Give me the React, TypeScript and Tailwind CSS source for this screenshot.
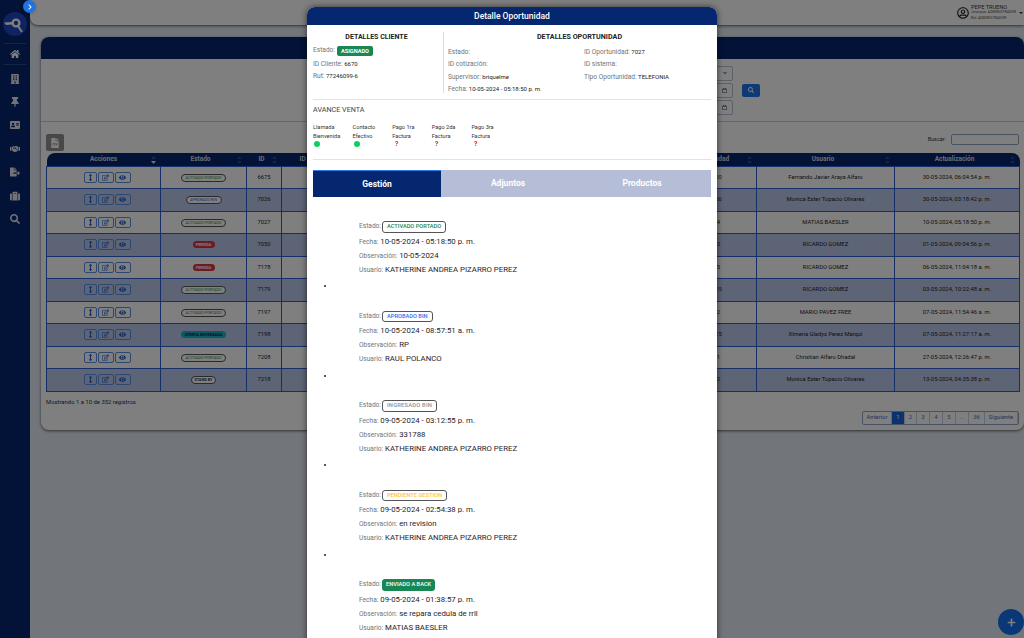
import React from 'react';
import {
  FaHome,
  FaBuilding,
  FaThumbtack,
  FaAddressCard,
  FaHandshake,
  FaFileExport,
  FaSuitcase,
  FaSearch,
  FaArrowsAltV,
  FaRegEdit,
  FaEye,
  FaFileCsv,
  FaChevronRight,
  FaRegCalendar,
  FaChevronDown,
  FaPlus,
  FaRegUserCircle,
  FaQuestion,
} from 'react-icons/fa';

type Status = 'activado' | 'aprobado' | 'perdida' | 'oferta' | 'standby';

interface Row {
  id: number;
  status: Status;
  qty: number;
  user: string;
  updated: string;
}

const rows: Row[] = [
  { id: 6675, status: 'activado', qty: 20, user: 'Fernando Javier Araya Alfaro', updated: '30-05-2024, 06:04:54 p. m.' },
  { id: 7026, status: 'aprobado', qty: 56, user: 'Monica Ester Topacio Olivares', updated: '30-05-2024, 03:18:42 p. m.' },
  { id: 7027, status: 'activado', qty: 4, user: 'MATIAS BAESLER', updated: '10-05-2024, 05:18:50 p. m.' },
  { id: 7050, status: 'perdida', qty: 3, user: 'RICARDO GOMEZ', updated: '01-05-2024, 09:04:56 p. m.' },
  { id: 7178, status: 'perdida', qty: 5, user: 'RICARDO GOMEZ', updated: '06-05-2024, 11:04:18 a. m.' },
  { id: 7179, status: 'activado', qty: 15, user: 'RICARDO GOMEZ', updated: '03-05-2024, 10:22:48 a. m.' },
  { id: 7197, status: 'activado', qty: 2, user: 'MARIO PAVEZ FREE', updated: '07-05-2024, 11:54:46 a. m.' },
  { id: 7198, status: 'oferta', qty: 15, user: 'Ximena Gladys Perez Marqui', updated: '07-05-2024, 11:27:17 a. m.' },
  { id: 7208, status: 'activado', qty: 1, user: 'Christian Alfaro Dhadal', updated: '27-05-2024, 12:26:47 p. m.' },
  { id: 7218, status: 'standby', qty: 2, user: 'Monica Ester Topacio Olivares', updated: '13-05-2024, 04:35:38 p. m.' },
];

const navIcons = [FaBuilding, FaThumbtack, FaAddressCard, FaHandshake, FaFileExport, FaSuitcase, FaSearch];

const pages = [
  { label: 'Anterior', cls: 'w-[29px]' },
  { label: '1', cls: 'w-[13px] bg-[#1565d8] text-white' },
  { label: '2', cls: 'w-[12px]' },
  { label: '3', cls: 'w-[13px]' },
  { label: '4', cls: 'w-[13px]' },
  { label: '5', cls: 'w-[13px]' },
  { label: '...', cls: 'w-[13px]' },
  { label: '36', cls: 'w-[16px]' },
  { label: 'Siguiente', cls: 'w-[33px]' },
];

const steps = [
  { top: 'Llamada', bottom: 'Bienvenida', done: true },
  { top: 'Contacto', bottom: 'Efectivo', done: true },
  { top: 'Pago 1ra', bottom: 'Factura', done: false },
  { top: 'Pago 2da', bottom: 'Factura', done: false },
  { top: 'Pago 3ra', bottom: 'Factura', done: false },
];

const history = [
  { badge: 'ACTIVADO PORTADO', cls: 'border border-[#555] text-[#198754]', date: '10-05-2024 - 05:18:50 p. m.', obs: '10-05-2024', user: 'KATHERINE ANDREA PIZARRO PEREZ' },
  { badge: 'APROBADO BIN', cls: 'border border-[#555] text-[#2f6fed]', date: '10-05-2024 - 08:57:51 a. m.', obs: 'RP', user: 'RAUL POLANCO' },
  { badge: 'INGRESADO BIN', cls: 'border border-[#555] text-[#8a9199] tracking-[0.25px]', date: '09-05-2024 - 03:12:55 p. m.', obs: '331788', user: 'KATHERINE ANDREA PIZARRO PEREZ' },
  { badge: 'PENDIENTE GESTION', cls: 'border border-[#555] text-[#ffc23d]', date: '09-05-2024 - 02:54:38 p. m.', obs: 'en revision', user: 'KATHERINE ANDREA PIZARRO PEREZ' },
  { badge: 'ENVIADO A BACK', cls: 'bg-[#198754] text-white', date: '09-05-2024 - 01:38:57 p. m.', obs: 'se repara cedula de rrll', user: 'MATIAS BAESLER' },
];

function StatusPill({ status }: { status: Status }) {
  if (status === 'perdida') {
    return <span className="inline-block w-[22px] rounded-full bg-[#dc3545] text-[3.8px] leading-[7px] font-bold text-white">PERDIDA</span>;
  }
  if (status === 'oferta') {
    return <span className="inline-block w-[45px] rounded-full bg-[#17b6cf] text-[3.9px] leading-[7px] font-bold text-[#123]">OFERTA ENTREGADA</span>;
  }
  if (status === 'aprobado') {
    return <span className="inline-block w-[36px] rounded-full border border-[#555] bg-white text-[3.8px] leading-[6px] text-[#2f6fed]">APROBADO BIN</span>;
  }
  if (status === 'standby') {
    return <span className="inline-block w-[25px] rounded-full border border-[#555] bg-white text-[3.8px] leading-[6px] font-bold text-[#333]">STAND BY</span>;
  }
  return <span className="inline-block w-[45px] rounded-full border border-[#555] bg-white text-[3.8px] leading-[6px] text-[#198754]">ACTIVADO PORTADO</span>;
}

function SortArrows({ dark }: { dark?: boolean }) {
  return (
    <svg width="5" height="8" viewBox="0 0 5 8" className="absolute right-[5px] top-[3px]">
      <path d="M2.5 0 L5 3 H0 Z" fill={dark ? '#3a4f80' : '#2a4585'} />
      <path d="M2.5 8 L5 5 H0 Z" fill={dark ? '#dfe3ec' : '#2a4585'} />
    </svg>
  );
}

function Logo() {
  return (
    <svg width="24" height="24" viewBox="0 0 24 24">
      <circle cx="12" cy="12" r="12" fill="#1f46c4" />
      <circle cx="13" cy="11" r="3.4" fill="none" stroke="#fff" strokeWidth="2.4" />
      <path d="M1 10.5 L9 10 L9 12.5 L3 13 Z" fill="#fff" />
      <path d="M15 14 L19 20" stroke="#fff" strokeWidth="2" />
    </svg>
  );
}

function Sidebar() {
  return (
    <aside className="relative flex w-[30px] shrink-0 flex-col items-center bg-[#04276f] pt-[12px]">
      <Logo />
      <div className="mt-[7px] h-px w-[22px] bg-[#2c4a8c]" />
      <div className="flex h-[20px] items-center text-white">
        <FaHome size={10} />
      </div>
      <div className="h-px w-[22px] bg-[#2c4a8c]" />
      <div className="mt-[2px] flex flex-col">
        {navIcons.map((Icon, i) => (
          <div key={i} className="flex h-[23.4px] items-center justify-center text-[#e8e4ee]">
            <Icon size={10} />
          </div>
        ))}
      </div>
      <button className="absolute left-[23px] top-0 z-10 flex h-[13px] w-[13px] items-center justify-center rounded-full bg-[#2272e0] text-white shadow">
        <FaChevronRight size={6} />
      </button>
    </aside>
  );
}

function TopBar() {
  return (
    <header className="flex h-[25px] items-center justify-end rounded-bl-lg bg-white pr-[1px] shadow-[0_1px_3px_rgba(0,0,0,0.6)]">
      <FaRegUserCircle size={12} className="mr-[2px] text-[#222]" />
      <div className="mr-[2px] w-[46px] whitespace-nowrap text-[#333]">
        <div className="text-[5.6px] leading-[6.5px]">PEPE TRUENO</div>
        <div className="text-[3.6px] leading-[5.5px] text-[#555]">Jerarquía: ADMINISTRADOR</div>
        <div className="text-[3.6px] leading-[5.5px] text-[#555]">Rol: ADMINISTRADOR</div>
      </div>
      <span className="h-0 w-0 border-x-[2px] border-t-[2px] border-x-transparent border-t-[#333]" />
    </header>
  );
}

function Field({ children }: { children: React.ReactNode }) {
  return (
    <div className="flex h-[15px] w-[100px] items-center justify-end rounded-[2px] border border-[#b6c2d6] bg-white pr-[5px] text-[#333]">
      {children}
    </div>
  );
}

function DataTable() {
  return (
    <table className="w-[973px] table-fixed border-collapse text-center text-[5.8px] text-[#222]">
      <colgroup>
        <col className="w-[114px]" />
        <col className="w-[86px]" />
        <col className="w-[35px]" />
        <col className="w-[399px]" />
        <col className="w-[76px]" />
        <col className="w-[138px]" />
        <col className="w-[125px]" />
      </colgroup>
      <thead>
        <tr className="h-[13px] text-[6.5px] font-bold text-[#d8dce6]">
          <th className="relative rounded-tl-lg bg-[#04276f] pt-[2px] font-bold">Acciones<SortArrows dark /></th>
          <th className="relative bg-[#04276f] pr-[6px] pt-[2px] font-bold">Estado<SortArrows /></th>
          <th className="relative bg-[#04276f] pr-[5px] pt-[2px] font-bold">ID<SortArrows /></th>
          <th className="bg-[#04276f] pl-[18px] pt-[2px] text-left font-bold">ID</th>
          <th className="relative bg-[#04276f] pr-[5px] pt-[2px] font-bold">Cantidad<SortArrows /></th>
          <th className="relative bg-[#04276f] pr-[5px] pt-[2px] font-bold">Usuario<SortArrows /></th>
          <th className="relative rounded-tr-lg bg-[#04276f] pr-[5px] pt-[2px] font-bold">Actualización<SortArrows /></th>
        </tr>
      </thead>
      <tbody>
        {rows.map((row, i) => (
          <tr key={row.id} className={`h-[22.5px] ${i % 2 === 1 ? 'bg-[#bbc8ea]' : 'bg-white'}`}>
            <td className="border border-[#2f5fd0]">
              <div className="flex items-center justify-center gap-[1px] pl-[7px] text-[#1f5fd0]">
                <span className="flex h-[11px] w-[13px] items-center justify-center rounded-[2px] border border-[#5a8fe6]"><FaArrowsAltV size={7} /></span>
                <span className="flex h-[11px] w-[16px] items-center justify-center rounded-[2px] border border-[#5a8fe6]"><FaRegEdit size={7} /></span>
                <span className="flex h-[11px] w-[16px] items-center justify-center rounded-[2px] border border-[#5a8fe6]"><FaEye size={7} /></span>
              </div>
            </td>
            <td className="border border-[#2f5fd0]"><StatusPill status={row.status} /></td>
            <td className="border border-[#2f5fd0]">{row.id}</td>
            <td className="border border-[#2f5fd0]" />
            <td className="border border-[#2f5fd0]">{row.qty}</td>
            <td className="border border-[#2f5fd0]">{row.user}</td>
            <td className="border border-[#2f5fd0]">{row.updated}</td>
          </tr>
        ))}
      </tbody>
    </table>
  );
}

function MainCard() {
  return (
    <section className="ml-[11px] mt-[12px] h-[393px] rounded-t-lg rounded-b-lg bg-white shadow-[0_1px_3px_rgba(0,0,0,0.6)]">
      <div className="h-[22px] rounded-t-lg bg-[#04276f]" />
      <div className="flex h-[63px] items-center justify-end gap-[9px] border-b border-[#ccc] pr-[264px]">
        <div className="flex flex-col gap-[2px]">
          <Field><FaChevronDown size={4} /></Field>
          <Field><FaRegCalendar size={5} /></Field>
          <Field><FaRegCalendar size={5} /></Field>
        </div>
        <button className="flex h-[13px] w-[18px] items-center justify-center rounded-[2px] bg-[#1d74ea] text-white">
          <FaSearch size={6} />
        </button>
      </div>
      <div className="px-[5px]">
        <div className="flex h-[31px] items-start justify-between pt-[12px]">
          <button className="flex h-[17px] w-[18px] items-center justify-center rounded-[2px] bg-[#909090] text-white">
            <FaFileCsv size={10} />
          </button>
          <div className="flex items-center gap-[5px] text-[5.5px] text-[#333]">
            <span>Buscar:</span>
            <div className="h-[11px] w-[68px] rounded-[2px] border border-[#8ea6c8] bg-white" />
          </div>
        </div>
        <DataTable />
        <div className="flex items-start justify-between pt-[6px] text-[5.9px] text-[#333]">
          <span>Mostrando 1 a 10 de 352 registros</span>
          <div className="mt-[13px] flex h-[14px] overflow-hidden rounded-[2px] border border-[#8ea6c8] bg-white text-[#3d6fc8]">
            {pages.map((p) => (
              <span key={p.label} className={`flex items-center justify-center border-r border-[#c5d2e8] ${p.cls}`}>{p.label}</span>
            ))}
          </div>
        </div>
      </div>
    </section>
  );
}

function Detail({ label, value }: { label: string; value?: string }) {
  return (
    <div className="h-[12.4px] whitespace-nowrap leading-[12px]">
      <span className="text-[6.6px] text-[#6c757d]">{label}</span>
      {value && <span className="text-[6px] text-[#222]"> {value}</span>}
    </div>
  );
}

function HistoryItem({ item }: { item: (typeof history)[number] }) {
  return (
    <div className="ml-[46px] flex h-[89.5px] flex-col text-[7.8px] leading-[13.2px] text-[#1f2327]">
      <div className="flex h-[15.5px] items-center gap-[1px]">
        <span className="text-[6.6px] text-[#6c757d]">Estado:</span>
        <span className={`flex h-[11.5px] items-center rounded-[3px] px-[4px] text-[5.7px] font-medium ${item.cls}`}>{item.badge}</span>
      </div>
      <div className="whitespace-nowrap"><span className="text-[6.6px] text-[#6c757d]">Fecha:</span> {item.date}</div>
      <div className="whitespace-nowrap"><span className="text-[6.6px] text-[#6c757d]">Observación:</span> {item.obs}</div>
      <div className="whitespace-nowrap"><span className="text-[6.6px] text-[#6c757d]">Usuario:</span> {item.user}</div>
      <div className="relative">
        <span className="absolute -left-[35px] top-[8px] h-[2px] w-[2px] rounded-full bg-[#222]" />
      </div>
    </div>
  );
}

function DetailModal() {
  return (
    <div className="absolute left-[307px] top-[7px] h-[700px] w-[410px] rounded-t-lg bg-white shadow-[0_0_6px_rgba(0,0,0,0.6)]">
      <div className="flex h-[18px] items-center justify-center rounded-t-lg bg-[#04276f] text-[8.5px] font-medium text-white">
        Detalle Oportunidad
      </div>
      <div className="px-[6px]">
        <div className="flex h-[75px] border-b border-[#e3e3e3] pb-[6px] pt-[7px]">
          <div className="w-[131px] border-r border-[#ddd] pr-[3px]">
            <div className="mb-[3.5px] text-center text-[7px] font-bold text-[#222]">DETALLES CLIENTE</div>
            <div className="flex h-[9px] items-center gap-[2px]">
              <span className="text-[6.6px] text-[#6c757d]">Estado:</span>
              <span className="rounded-[2px] bg-[#198754] px-[4px] text-[5.6px] leading-[10px] font-bold text-white">ASIGNADO</span>
            </div>
            <Detail label="ID Cliente:" value="6670" />
            <Detail label="Rut:" value="77246099-6" />
          </div>
          <div className="flex-1 pl-[4px]">
            <div className="text-center text-[7.2px] font-bold text-[#222]">DETALLES OPORTUNIDAD</div>
            <div className="grid grid-cols-[136px_1fr]">
              <div>
                <Detail label="Estado:" />
                <Detail label="ID cotización:" />
                <Detail label="Supervisor:" value="briquelme" />
                <Detail label="Fecha:" value="10-05-2024 - 05:18:50 p. m." />
              </div>
              <div>
                <Detail label="ID Oportunidad:" value="7027" />
                <Detail label="ID sistema:" />
                <Detail label="Tipo Oportunidad:" value="TELEFONIA" />
              </div>
            </div>
          </div>
        </div>

        <div className="h-[60px] border-b border-[#e3e3e3]">
          <div className="pt-[4px] text-[7.2px] font-normal leading-[12px] text-[#444]">AVANCE VENTA</div>
          <div className="mt-[7px] flex">
            {steps.map((s) => (
              <div key={s.top} className="w-[39.6px] text-[5.6px] leading-[8.7px] text-[#333]">
                <div>{s.top}</div>
                <div>{s.bottom}</div>
                {s.done ? (
                  <div className="ml-[1px] mt-[1px] h-[6px] w-[6px] rounded-full bg-[#0bd25f]" />
                ) : (
                  <FaQuestion size={5} className="ml-[2px] mt-[1px] text-[#f0443e]" />
                )}
              </div>
            ))}
          </div>
        </div>

        <div className="mt-[10px] flex h-[27px] w-[398px] bg-[#b5bed6] text-[8.5px] font-bold text-white">
          <div className="flex w-[128px] items-center justify-center border-t border-[#2f7be8] bg-[#04276f]">Gestión</div>
          <div className="flex w-[134px] items-center justify-center">Adjuntos</div>
          <div className="flex w-[134px] items-center justify-center">Productos</div>
        </div>

        <div className="pt-[22px]">
          {history.map((item) => (
            <HistoryItem key={item.date} item={item} />
          ))}
        </div>
      </div>
    </div>
  );
}

export default function App() {
  return (
    <div className="relative h-[638px] w-[1024px] overflow-hidden bg-[#e4ebf5] font-['Roboto',sans-serif]">
      <div className="flex h-full">
        <Sidebar />
        <div className="min-w-0 flex-1">
          <TopBar />
          <MainCard />
        </div>
      </div>
      <button className="absolute bottom-[3px] right-0 flex h-[26px] w-[26px] items-center justify-center rounded-full bg-[#1570ef] text-white">
        <FaPlus size={9} />
      </button>
      <div className="absolute inset-0 bg-black/50" />
      <DetailModal />
    </div>
  );
}
